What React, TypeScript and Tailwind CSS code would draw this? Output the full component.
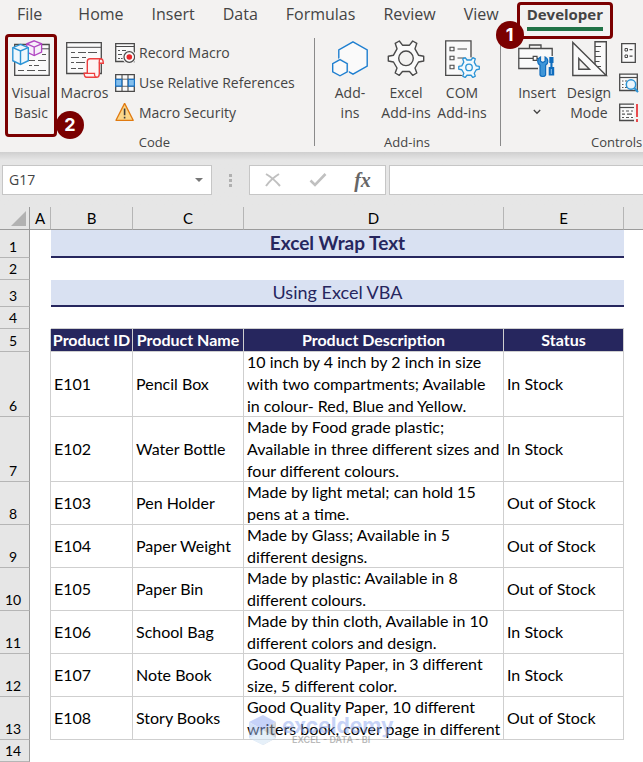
import type { ReactNode } from 'react';
import { clsx } from 'clsx';

const tabs = ['File', 'Home', 'Insert', 'Data', 'Formulas', 'Review', 'View', 'Developer'];

type Product = {
  id: string;
  name: string;
  description: string;
  status: string;
  tall?: boolean;
};

const products: Product[] = [
  {
    id: 'E101',
    name: 'Pencil Box',
    description:
      '10 inch by 4 inch by 2 inch in size\nwith two compartments; Available\nin colour- Red, Blue and Yellow.',
    status: 'In Stock',
    tall: true,
  },
  {
    id: 'E102',
    name: 'Water Bottle',
    description:
      'Made by Food grade plastic;\nAvailable in three different sizes and\nfour different colours.',
    status: 'In Stock',
    tall: true,
  },
  {
    id: 'E103',
    name: 'Pen Holder',
    description: 'Made by light metal; can hold 15\npens at a time.',
    status: 'Out of Stock',
  },
  {
    id: 'E104',
    name: 'Paper Weight',
    description: 'Made by Glass; Available in 5\ndifferent designs.',
    status: 'Out of Stock',
  },
  {
    id: 'E105',
    name: 'Paper Bin',
    description: 'Made by plastic: Available in 8\ndifferent colours.',
    status: 'Out of Stock',
  },
  {
    id: 'E106',
    name: 'School Bag',
    description: 'Made by thin cloth, Available in 10\ndifferent colors and design.',
    status: 'In Stock',
  },
  {
    id: 'E107',
    name: 'Note Book',
    description: 'Good Quality Paper, in 3 different\nsize, 5 different color.',
    status: 'In Stock',
  },
  {
    id: 'E108',
    name: 'Story Books',
    description: 'Good Quality Paper, 10 different\nwriters book, cover page in different',
    status: 'Out of Stock',
  },
];

/* ---------- icons ---------- */

function VisualBasicIcon() {
  return (
    <svg width="38" height="38" viewBox="0 0 38 38" fill="none" aria-hidden="true">
      <path d="M2.7 4.5H37.2V35.3H2.7Z" fill="#fafafa" stroke="#4a4a4a" strokeWidth="1.3" />
      <path d="M3 8.8H37" stroke="#4a4a4a" />
      <path d="M30 14.5h4M17 20.5h6M26 20.5h8M17 25.5h3M22 25.5h5M6 30.5h6M15 30.5h8M26 30.5h8" stroke="#555" strokeWidth="1.2" />
      <path d="M22.2.8 29.6 3.8V12.2L22.2 15.6 14.8 12.2V3.8Z" fill="#f7effa" stroke="#b146c2" strokeWidth="1.3" />
      <path d="M14.8 3.8 22.2 7 29.6 3.8M22.2 7V15.6" stroke="#b146c2" strokeWidth="1.3" />
      <path d="M8.5 4.4 16.3 7.7V20.7L8.5 24.4.8 20.7V7.7Z" fill="#eff7fc" stroke="#2b94d6" strokeWidth="1.4" />
      <path d="M.8 7.7 8.5 11 16.3 7.7M8.5 11V24.4" stroke="#2b94d6" strokeWidth="1.4" />
    </svg>
  );
}

function MacrosIcon() {
  return (
    <svg width="38" height="38" viewBox="0 -2 38 38" fill="none" aria-hidden="true">
      <path d="M.7.7H35.3V31.5H.7Z" fill="#fafafa" stroke="#4a4a4a" strokeWidth="1.3" />
      <path d="M1 5.3H35" stroke="#4a4a4a" />
      <path d="M5 10.5h4M12 10.5h8M22 10.5h9M5 15.5h8M16 15.5h4M5 20.5h3M10 20.5h9M5 26.5h5M12 26.5h5" stroke="#555" strokeWidth="1.2" />
      <path
        d="M24 16.7H34.5Q37.3 16.7 37.3 21.3H33.3V31.5Q33.3 35.3 30.5 35.3H20.5Q18.2 35.3 18.2 31.3H21.3V19.5Q21.3 16.7 24 16.7Z"
        fill="#fdf3f3"
        stroke="#ee3f3f"
        strokeWidth="1.4"
      />
      <path d="M33.3 21.3V19Q33.3 16.7 35 16.9M21.3 31.3H28.5Q28.3 35.3 30.7 35.3" stroke="#ee3f3f" strokeWidth="1.3" />
    </svg>
  );
}

function RecordMacroIcon() {
  return (
    <svg width="20" height="20" viewBox="0 0 20 20" fill="none" aria-hidden="true">
      <path d="M.7.7H19.3V18.5H.7Z" fill="#fafafa" stroke="#4a4a4a" strokeWidth="1.3" />
      <path d="M1 3.5H19" stroke="#4a4a4a" />
      <path d="M3 7.5h2M7 7.5h4M3 11.5h4M3 15.5h2M6 15.5h2" stroke="#555" strokeWidth="1.2" />
      <circle cx="14.3" cy="14" r="7" fill="#f3f2f1" />
      <circle cx="14.3" cy="14" r="5.3" fill="#fafafa" stroke="#4a4a4a" strokeWidth="1.2" />
      <circle cx="14.3" cy="14" r="2.8" fill="#e8282b" />
    </svg>
  );
}

function RelativeRefsIcon() {
  return (
    <svg width="20" height="20" viewBox="0 0 20 20" fill="none" aria-hidden="true">
      <path d="M.7 1.7H19.3V18.3H.7Z" fill="#fafafa" stroke="#4a4a4a" strokeWidth="1.3" />
      <path d="M7 2V18M13 2V18" stroke="#4a4a4a" strokeWidth="1.1" />
      <path d="M1 6.2H19M1 13.3H19" stroke="#4a4a4a" strokeWidth=".8" />
      <path d="M.6 6.3H6.8V13.1H.6ZM13.3 6.3H19.4V13.1H13.3Z" fill="#83beec" stroke="#1b74c5" strokeWidth="1.2" />
    </svg>
  );
}

function WarningIcon() {
  return (
    <svg width="20" height="20" viewBox="0 1 20 20" fill="none" aria-hidden="true">
      <path d="M9.6 1.4 18.2 18.3H1Z" fill="#fbd688" stroke="#e07a10" strokeWidth="1.3" strokeLinejoin="round" />
      <path d="M9.6 6.5V13.3M9.6 14.8V16.6" stroke="#3c3c3c" strokeWidth="1.6" />
    </svg>
  );
}

function AddInsIcon() {
  return (
    <svg width="38" height="38" viewBox="-1 -1 38 38" fill="none" aria-hidden="true">
      <path d="M21 .8 35.2 8.8V25L21 33.2 6.8 25V8.8Z" fill="#fafafa" stroke="#1e7fd0" strokeWidth="1.4" />
      <path d="M8 16.8 16.8 21.8V32L8 37-1 32V21.8Z" fill="#f3f2f1" />
      <path d="M8 18.6 15.2 22.6V30.8L8 34.8.7 30.8V22.6Z" fill="#fafafa" stroke="#1e7fd0" strokeWidth="1.4" />
    </svg>
  );
}

const gearPath =
  'M8.2 3.3 12.3 1 15.5 5.2H22.5L25.7 1 29.8 3.3 28 8.8 31.5 15.2 36.7 16.3V21L31.5 22 28 28 29.8 33 25.7 35.3 22.5 31.5H15.5L12.3 35.3 8.2 33 10 28 6.5 22 1.3 21V16.3L6.5 15.2 10 8.8Z';

function GearIcon() {
  return (
    <svg width="38" height="38" viewBox="0 0 38 38" fill="none" aria-hidden="true">
      <path d={gearPath} fill="#fafafa" stroke="#4a4a4a" strokeWidth="1.4" strokeLinejoin="round" />
      <circle cx="19" cy="18.3" r="7.3" fill="#f3f2f1" stroke="#4a4a4a" strokeWidth="1.4" />
    </svg>
  );
}

function ComAddInsIcon() {
  return (
    <svg width="38" height="38" viewBox="-2 0 38 38" fill="none" aria-hidden="true">
      <path d="M.7.9H26V35.3H.7Z" fill="#fafafa" stroke="#4a4a4a" strokeWidth="1.3" />
      <path d="M5 7.3h4v3.4H5ZM5 16.3h4v3.4H5ZM5 25.3h4v3.4H5Z" stroke="#4a4a4a" strokeWidth="1.1" />
      <path d="M12.5 9H22M12.5 18H19" stroke="#4a4a4a" strokeWidth="1.2" />
      <circle cx="24" cy="27.5" r="10.5" fill="#f3f2f1" />
      <g transform="translate(13 17) scale(.58)">
        <path d={gearPath} fill="#f2f9fd" stroke="#2b94d6" strokeWidth="2.3" strokeLinejoin="round" />
        <circle cx="19" cy="18" r="5.6" stroke="#2b94d6" strokeWidth="2.3" />
      </g>
    </svg>
  );
}

function ToolboxIcon() {
  return (
    <svg width="38" height="38" viewBox="0 -4 38 38" fill="none" aria-hidden="true">
      <path d="M11.5 4.3V1H23V4.3" stroke="#4a4a4a" strokeWidth="1.3" />
      <path d="M.8 4.5H34.2V24.5H.8Z" fill="#fafafa" stroke="#4a4a4a" strokeWidth="1.3" />
      <path d="M.8 14.3H15M19 14.3H22" stroke="#4a4a4a" strokeWidth="1.2" />
      <path d="M15.2 12.3h3.8v4h-3.8Z" fill="#fff" stroke="#4a4a4a" strokeWidth="1.2" />
      <path d="M20 12H37V33H20Z" fill="#f3f2f1" />
      <path
        d="M22.5 13v4.2l2.3 1.4 2.3-1.4V13q2.7 1.4 2.7 4.4 0 2.4-2.2 3.8V31q-.6 1.5-2.8 1.5T22 31V21.2q-2.3-1.4-2.3-3.8 0-3 2.8-4.4Z"
        fill="#3f96d8"
        stroke="#0f6cbd"
        strokeWidth="1.2"
      />
      <path d="M31.3 13h4.200v6h-1v4h1.700v8.500h-5.500V23h1.700v-4h-1.100Z" fill="#0f6cbd" />
      <path d="M33.3 25v5" stroke="#8cc4ee" />
    </svg>
  );
}

function DesignModeIcon() {
  return (
    <svg width="38" height="38" viewBox="-2 -1 38 38" fill="none" aria-hidden="true">
      <path d="M23 .8H34.3V34H23Z" fill="#fafafa" stroke="#4a4a4a" strokeWidth="1.4" />
      <path d="M23 5.5h6M23 10.5h4.5M23 15.5h6M23 20.5h4.5M23 25.5h6" stroke="#4a4a4a" strokeWidth="1.2" />
      <path d="M.8 1.5V34.5H34.3Z" fill="#fafafa" stroke="#4a4a4a" strokeWidth="1.4" />
      <path d="M6.8 17.5V28.2H17.5Z" fill="#f3f2f1" stroke="#4a4a4a" strokeWidth="1.4" />
    </svg>
  );
}

function PropertiesIcon() {
  return (
    <svg width="20" height="20" viewBox="-2 0 20 20" fill="none" aria-hidden="true">
      <path d="M.7.7H14.3V19.3H.7Z" fill="#fafafa" stroke="#4a4a4a" strokeWidth="1.3" />
      <path d="M4 5.5h2.5V8H4ZM4 12h2.5v2.5H4Z" stroke="#4a4a4a" />
      <path d="M8.5 6.7h3M8.5 13.2h3" stroke="#4a4a4a" strokeWidth="1.2" />
    </svg>
  );
}

function ViewCodeIcon() {
  return (
    <svg width="20" height="20" viewBox="0 0 20 20" fill="none" aria-hidden="true">
      <path d="M.7 1.2H18.3V17.5H.7Z" fill="#fafafa" stroke="#4a4a4a" strokeWidth="1.3" />
      <path d="M1 4.5H18" stroke="#4a4a4a" strokeWidth="1.2" />
      <path d="M3 8h1.5M6 8h2M3 11.5h1.5M3 14.5h1.5M6 14.5h2" stroke="#555" strokeWidth="1.2" />
      <circle cx="12" cy="11.5" r="4.7" fill="#eaf5fc" stroke="#2b94d6" strokeWidth="1.5" />
      <path d="M15.4 15 19 19.2" stroke="#2b94d6" strokeWidth="2" />
    </svg>
  );
}

function RunDialogIcon() {
  return (
    <svg width="20" height="20" viewBox="0 0 20 20" fill="none" aria-hidden="true">
      <path d="M15 1.2H.7V17.5H15" fill="#fafafa" stroke="#4a4a4a" strokeWidth="1.3" />
      <path d="M1 4.5H15" stroke="#4a4a4a" strokeWidth="1.2" />
      <path d="M3 8h2M7 8h3M12 8h2M3 11.2h3M8 11.2h5M3 14.5h2M7 14.5h3M12 14.5h2" stroke="#555" strokeWidth="1.2" />
      <path d="M18 1V14M18 16V19" stroke="#e8393c" strokeWidth="1.8" />
    </svg>
  );
}

function Watermark() {
  return (
    <div className="pointer-events-none absolute top-[17px] left-1 z-10 flex items-center gap-1 whitespace-nowrap opacity-50">
      <svg width="30" height="32" viewBox="0 0 30 32" aria-hidden="true">
        <path d="M15 1 28 8 15 16 1 8Z" fill="#8ea6f2" />
        <path d="M1 8 15 16V31L1 24Z" fill="#a9c3f3" />
        <path d="M28 8V24L15 31V16Z" fill="#a6adb8" />
        <path d="M1 24 15 16 28 24 15 31Z" fill="#cfe3f5" />
      </svg>
      <div className="flex flex-col">
        <span className="font-[Inter] text-[21px] leading-5 font-bold text-[#8fa8f0]">exceldemy</span>
        <span className="pl-2.5 font-[Inter] text-[9px] leading-2 font-semibold text-[#777]">
          EXCEL - DATA - BI
        </span>
      </div>
    </div>
  );
}

/* ---------- ribbon ---------- */

function StepBadge({ n, className }: { n: number; className: string }) {
  return (
    <span
      className={clsx(
        'absolute z-10 flex size-7 items-center justify-center rounded-full bg-[#7b0000] font-[Inter] text-lg font-bold text-white',
        className,
      )}
    >
      {n}
    </span>
  );
}

function BigButton({ icon, className, children }: { icon: ReactNode; className: string; children: ReactNode }) {
  return (
    <button type="button" className={clsx('relative flex flex-col items-center pt-1.5 leading-5', className)}>
      <span className="flex h-[43px]">{icon}</span>
      {children}
    </button>
  );
}

function SmallButton({ icon, children }: { icon: ReactNode; children: ReactNode }) {
  return (
    <button type="button" className="flex h-[30px] items-center gap-1 whitespace-nowrap">
      {icon}
      {children}
    </button>
  );
}

function Group({ label, className, labelClass, children }: {
  label: string;
  className?: string;
  labelClass?: string;
  children: ReactNode;
}) {
  return (
    <section aria-label={label} className={clsx('flex flex-col', className)}>
      <div className="flex h-[98px] items-start">{children}</div>
      <div className={clsx('h-5 text-[13px] leading-5', labelClass)}>{label}</div>
    </section>
  );
}

function Separator() {
  return <div className="mt-1 mb-1.5 w-px shrink-0 bg-[#8a8a8a]" />;
}

function Ribbon() {
  return (
    <header className="overflow-hidden bg-[#f3f2f1] font-['Open_Sans',sans-serif] text-sm text-[#444]">
      <nav className="flex h-[34px] gap-7 pl-[17px] text-base leading-7">
        {tabs.map((tab) => (
          <button
            key={tab}
            type="button"
            className={clsx(
              'relative h-7',
              tab === 'File' && 'mr-2',
              tab === 'Developer' && 'text-[15px] leading-7 font-bold',
            )}
          >
            {tab}
            {tab === 'Developer' && (
              <>
                <span className="absolute inset-x-0 top-[27px] h-1 bg-[#217346]" />
                <span className="absolute -inset-x-2.5 top-0.5 h-[37px] rounded-sm border-3 border-[#7b0000]" />
                <StepBadge n={1} className="top-[21px] -left-[31px]" />
              </>
            )}
          </button>
        ))}
      </nav>
      <div className="flex">
        <Group label="Code" className="w-[314px] shrink-0 pl-[5px]" labelClass="pr-2.5 text-center">
          <BigButton icon={<VisualBasicIcon />} className="h-[103px] w-[52px] shrink-0">
            <span>
              Visual
              <br />
              Basic
            </span>
            <span className="absolute inset-0 rounded-sm border-3 border-[#7b0000]" />
            <StepBadge n={2} className="top-[77px] left-[51px]" />
          </BigButton>
          <BigButton icon={<MacrosIcon />} className="w-[55px] shrink-0">
            Macros
          </BigButton>
          <div className="flex flex-col pt-1 pl-[3px]">
            <SmallButton icon={<RecordMacroIcon />}>Record Macro</SmallButton>
            <SmallButton icon={<RelativeRefsIcon />}>Use Relative References</SmallButton>
            <SmallButton icon={<WarningIcon />}>Macro Security</SmallButton>
          </div>
        </Group>
        <Separator />
        <Group label="Add-ins" className="w-[185px] shrink-0 pl-[7px]" labelClass="pr-2 text-center">
          <BigButton icon={<AddInsIcon />} className="w-14">
            <span>
              Add-
              <br />
              ins
            </span>
          </BigButton>
          <BigButton icon={<GearIcon />} className="w-14">
            <span className="whitespace-nowrap">
              Excel
              <br />
              Add-ins
            </span>
          </BigButton>
          <BigButton icon={<ComAddInsIcon />} className="w-14">
            <span className="whitespace-nowrap">
              COM
              <br />
              Add-ins
            </span>
          </BigButton>
        </Group>
        <Separator />
        <Group label="Controls" className="min-w-0 flex-1 pl-2.5" labelClass="pl-20">
          <BigButton icon={<ToolboxIcon />} className="w-[52px] shrink-0">
            Insert
            <svg width="8" height="6" viewBox="0 0 8 6" fill="none" className="mt-1.5" aria-hidden="true">
              <path d="M.8 1 4 4.3 7.2 1" stroke="#444" strokeWidth="1.3" />
            </svg>
          </BigButton>
          <BigButton icon={<DesignModeIcon />} className="w-[52px] shrink-0">
            <span>
              Design
              <br />
              Mode
            </span>
          </BigButton>
          <div className="flex flex-col pt-1 pl-1">
            <button type="button" aria-label="Properties" className="flex h-[30px] items-center">
              <PropertiesIcon />
            </button>
            <button type="button" aria-label="View Code" className="flex h-[30px] items-center">
              <ViewCodeIcon />
            </button>
            <button type="button" aria-label="Run Dialog" className="flex h-[30px] items-center">
              <RunDialogIcon />
            </button>
          </div>
        </Group>
      </div>
    </header>
  );
}

/* ---------- formula bar ---------- */

function FormulaBar() {
  return (
    <div className="bg-linear-to-b from-[#cfcfcf] to-[#e6e6e6] to-15% pt-[13px] pb-3">
      <div className="flex h-[30px] pl-0.5">
        <div className="flex w-[210px] items-center border border-[#c6c6c6] bg-white pr-2">
          <input
            aria-label="Name Box"
            defaultValue="G17"
            className="min-w-0 flex-1 bg-transparent pl-1.5 font-['Open_Sans',sans-serif] text-sm text-[#444] outline-none"
          />
          <button type="button" aria-label="Open name list">
            <svg width="8" height="4" viewBox="0 0 8 4" aria-hidden="true">
              <path d="M0 0H8L4 4Z" fill="#777" />
            </svg>
          </button>
        </div>
        <div className="flex w-[37px] flex-col items-center justify-center gap-0.5">
          <span className="size-[3px] bg-[#b0b0b0]" />
          <span className="size-[3px] bg-[#b0b0b0]" />
          <span className="size-[3px] bg-[#b0b0b0]" />
        </div>
        <div className="mr-[3px] flex w-[137px] items-center border border-[#c6c6c6] bg-white">
          <button type="button" aria-label="Cancel" className="flex flex-1 justify-center">
            <svg width="16" height="14" viewBox="0 0 16 14" fill="none" aria-hidden="true">
              <path d="M1 1Q8 5 15 13M14 1Q6 6 1 13" stroke="#c0c0c0" strokeWidth="2" />
            </svg>
          </button>
          <button type="button" aria-label="Enter" className="flex flex-1 justify-center">
            <svg width="18" height="14" viewBox="0 0 18 14" fill="none" aria-hidden="true">
              <path d="M1.5 7.5 6 12 16.5 1" stroke="#c0c0c0" strokeWidth="2.6" />
            </svg>
          </button>
          <button
            type="button"
            aria-label="Insert Function"
            className="flex-1 font-['Liberation_Serif',serif] text-xl leading-6 font-bold text-[#666] italic"
          >
            fx
          </button>
        </div>
        <input
          aria-label="Formula"
          className="min-w-0 flex-1 border border-r-0 border-[#c6c6c6] bg-white px-2 text-sm outline-none"
        />
      </div>
    </div>
  );
}

/* ---------- sheet ---------- */

function RowHeader({ n, className }: { n: number; className: string }) {
  return (
    <th
      scope="row"
      className={clsx(
        'border-r border-b border-r-[#9b9b9b] border-b-[#b5b5b5] bg-[#e6e6e6] p-0 pr-[3px] text-center align-bottom text-sm leading-5 font-normal',
        className,
      )}
    >
      {n}
    </th>
  );
}

function Cell({ tall, children }: { tall?: boolean; children: ReactNode }) {
  return (
    <td className="relative border-r border-b border-[#cfcfcf] p-0">
      <div
        className={clsx(
          'flex items-center overflow-hidden pl-[3px] leading-[22px] whitespace-pre',
          tall ? 'h-16' : 'h-[42px]',
        )}
      >
        {children}
      </div>
    </td>
  );
}

function Sheet() {
  return (
    <table className="w-full table-fixed border-separate border-spacing-0 bg-white font-[Lato,sans-serif] text-base text-black">
      <colgroup>
        <col className="w-[30px]" />
        <col className="w-[21px]" />
        <col className="w-[82px]" />
        <col className="w-[111px]" />
        <col className="w-[260px]" />
        <col className="w-[120px]" />
        <col />
      </colgroup>
      <thead>
        <tr className="bg-[#e6e6e6]">
          <td className="h-[23px] border-r border-b border-[#9b9b9b] p-0">
            <svg width="15" height="15" viewBox="0 0 15 15" className="ml-[11px]" aria-hidden="true">
              <path d="M15 0V15H0Z" fill="#b2b2b2" />
            </svg>
          </td>
          {['A', 'B', 'C', 'D', 'E'].map((col) => (
            <th
              key={col}
              scope="col"
              className="h-[23px] border-r border-b border-r-[#b5b5b5] border-b-[#9b9b9b] p-0 text-center text-[15px] leading-[22px] font-normal"
            >
              {col}
            </th>
          ))}
          <td className="border-b border-[#9b9b9b] p-0" />
        </tr>
      </thead>
      <tbody>
        <tr>
          <RowHeader n={1} className="h-7" />
          <td />
          <td
            colSpan={4}
            className="border-b-2 border-[#26265e] bg-[#d9e1f2] p-0 text-center text-[19px] leading-[26px] font-bold text-[#26265e]"
          >
            Excel Wrap Text
          </td>
          <td />
        </tr>
        <tr>
          <RowHeader n={2} className="h-[22px]" />
          <td colSpan={6} />
        </tr>
        <tr>
          <RowHeader n={3} className="h-[27px]" />
          <td />
          <td
            colSpan={4}
            className="border-b-2 border-[#26265e] bg-[#d9e1f2] p-0 text-center text-lg leading-[25px] text-[#26265e]"
          >
            Using Excel VBA
          </td>
          <td />
        </tr>
        <tr>
          <RowHeader n={4} className="h-[22px]" />
          <td />
          <td colSpan={4} className="border-b border-[#cfcfcf]" />
          <td />
        </tr>
        <tr>
          <RowHeader n={5} className="h-[23px]" />
          <td className="border-r border-[#cfcfcf]" />
          {['Product ID', 'Product Name', 'Product Description', 'Status'].map((title) => (
            <th
              key={title}
              className="border-r border-b border-[#cfcfcf] bg-[#26265e] p-0 text-center leading-[22px] font-bold whitespace-nowrap text-white"
            >
              {title}
            </th>
          ))}
          <td />
        </tr>
        {products.map((p, i) => (
          <tr key={p.id}>
            <RowHeader n={i + 6} className={p.tall ? 'h-[65px]' : 'h-[43px]'} />
            <td className="border-r border-[#cfcfcf]" />
            <Cell tall={p.tall}>{p.id}</Cell>
            <Cell tall={p.tall}>{p.name}</Cell>
            <Cell tall={p.tall}>
              {p.description}
              {p.id === 'E108' && <Watermark />}
            </Cell>
            <Cell tall={p.tall}>{p.status}</Cell>
            <td />
          </tr>
        ))}
        <tr>
          <RowHeader n={14} className="h-[22px]" />
          <td colSpan={6} />
        </tr>
      </tbody>
    </table>
  );
}

export default function App() {
  return (
    <main className="w-full overflow-hidden bg-white">
      <Ribbon />
      <FormulaBar />
      <Sheet />
    </main>
  );
}
